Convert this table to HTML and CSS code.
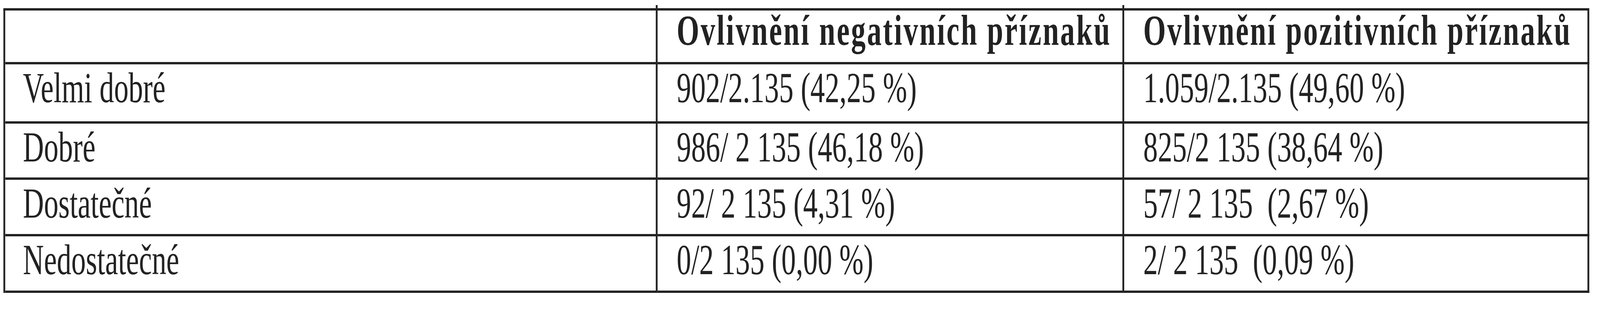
FILE: index.html
```html
<!DOCTYPE html>
<html lang="cs">
<head>
<meta charset="utf-8">
<title>Ovlivnění příznaků</title>
<link rel="stylesheet" href="styles.css">
</head>
<body>
<div class="frame">
<table class="results">
  <thead>
    <tr class="row-head">
      <th class="col1 divider"></th>
      <th class="col2 divider">Ovlivnění negativních příznaků</th>
      <th class="col3">Ovlivnění pozitivních příznaků</th>
    </tr>
  </thead>
  <tbody>
    <tr class="row-1">
      <td class="col1">Velmi dobré</td>
      <td class="col2">902/2.135 (42,25 %)</td>
      <td class="col3">1.059/2.135 (49,60 %)</td>
    </tr>
    <tr class="row-2">
      <td class="col1">Dobré</td>
      <td class="col2">986/ 2 135 (46,18 %)</td>
      <td class="col3">825/2 135 (38,64 %)</td>
    </tr>
    <tr class="row-3">
      <td class="col1">Dostatečné</td>
      <td class="col2">92/ 2 135 (4,31 %)</td>
      <td class="col3">57/ 2 135  (2,67 %)</td>
    </tr>
    <tr class="row-4">
      <td class="col1">Nedostatečné</td>
      <td class="col2">0/2 135 (0,00 %)</td>
      <td class="col3">2/ 2 135  (0,09 %)</td>
    </tr>
  </tbody>
</table>
</div>
</body>
</html>
```
FILE: styles.css
```css
html, body {
  margin: 0;
  padding: 0;
  background: #ffffff;
}

body {
  height: 800px;
  overflow: hidden;
  font-family: "Liberation Serif", "Times New Roman", serif;
  color: #222222;
}

.frame {
  width: 100%;
  height: 800px;
  overflow: hidden;
}

.results {
  box-sizing: border-box;
  margin: 21px 0 0 13px;
  width: 6070px;
  table-layout: fixed;
  border-collapse: separate;
  border-spacing: 0;
  border-top: 6px solid #232323;
  border-left: 7px solid #232323;
  transform-origin: 0 0;
}

/* The design is 6124px wide; when the browser window is narrower
   (the window here is capped at 4096px) squeeze it horizontally
   so that the whole table stays inside the frame. */
@media (max-width: 6123px) {
  .results {
    margin-left: 0;
    transform: translateX(8.695px) scaleX(0.66884);
  }
}

.results th,
.results td {
  box-sizing: border-box;
  text-align: left;
  vertical-align: top;
  white-space: pre;
  font-size: 111px;
  border-right: 7px solid #232323;
  border-bottom: 6px solid #232323;
  padding-left: 73px;
  padding-right: 0;
}

.results th {
  position: relative;
  font-weight: bold;
  letter-spacing: 5.5px;
  line-height: 100px;
  padding-top: 1px;
  padding-bottom: 31px;
}

.results td {
  font-weight: normal;
  line-height: 110px;
  padding-top: 5px;
}

.results .col1 {
  width: 2497px;
  padding-left: 68px;
}

.results .col2 {
  width: 1786px;
}

.results .col3 {
  width: 1780px;
}

/* column dividers poke slightly above the top rule */
.divider::before {
  content: "";
  position: absolute;
  left: 100%;
  top: -14px;
  width: 7px;
  height: 14px;
  background: #232323;
}

.row-1 td { padding-bottom: 31px; }
.row-2 td { padding-bottom: 23px; }
.row-3 td { padding-bottom: 24px; }
.row-4 td { padding-bottom: 24px; }
```
